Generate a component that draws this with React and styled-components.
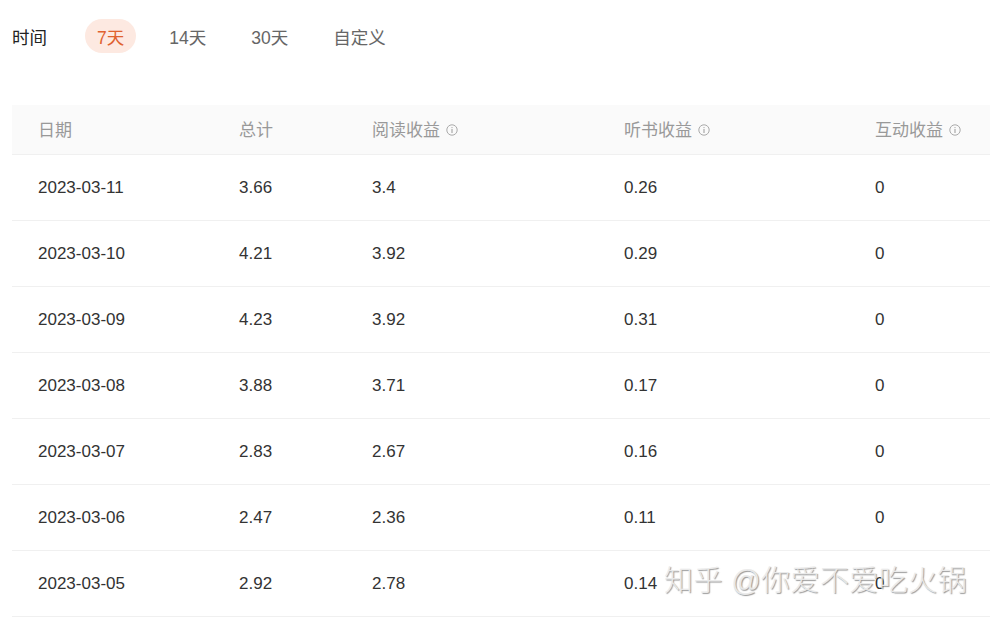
import React from 'react';
import styled, { createGlobalStyle } from 'styled-components';

const GlobalStyle = createGlobalStyle`
  body {
    margin: 0;
    background: #fff;
    font-family: 'Liberation Sans', 'Noto Sans CJK SC', sans-serif;
  }
`;

const Root = styled.div`
  position: relative;
  width: 990px;
  height: 617px;
  overflow: hidden;
`;

const FilterBar = styled.div`
  display: flex;
  align-items: center;
  height: 34px;
  padding: 19px 0 0 12px;
`;

const FilterLabel = styled.span`
  font-size: 17.5px;
  color: #222;
  margin-right: 38px;
`;

const FilterItem = styled.span`
  display: inline-flex;
  align-items: center;
  height: 34px;
  padding: 0 12px;
  margin-right: 21px;
  border-radius: 17px;
  font-size: 17.5px;
  color: ${(props) => (props.$active ? '#e0622f' : '#666')};
  background-color: ${(props) => (props.$active ? '#fde9e1' : 'transparent')};
`;

const Table = styled.div`
  margin: 52px 0 0 12px;
`;

const Row = styled.div`
  display: grid;
  grid-template-columns: 201px 133px 252px 251px 1fr;
  align-items: center;
  height: ${(props) => (props.$head ? '50px' : '66px')};
  padding-bottom: ${(props) => (props.$head ? '2px' : '0')};
  background-color: ${(props) => (props.$head ? '#fafafa' : '#fff')};
  border-bottom: 1px solid #f0f0f0;
  box-sizing: border-box;
`;

const Cell = styled.div`
  padding-left: 26px;
  font-size: 17px;
  color: ${(props) => (props.$head ? '#999' : '#333')};
  display: flex;
  align-items: center;
`;

const InfoIcon = styled.svg`
  width: 12px;
  height: 12px;
  margin-left: 6px;
  margin-top: 2px;
`;

const Watermark = styled.div`
  position: absolute;
  left: 664px;
  top: 557px;
  font-size: 29px;
  font-weight: 300;
  color: rgba(235, 235, 235, 0.95);
  text-shadow: 1px 1px 1px rgba(110, 110, 110, 0.7);
  white-space: nowrap;
  letter-spacing: 0.4px;
`;

const Info = () => (
  <InfoIcon viewBox="0 0 12 12">
    <circle cx="6" cy="6" r="5.2" fill="none" stroke="#aaa" strokeWidth="1" />
    <circle cx="6" cy="3.6" r="0.7" fill="#aaa" />
    <rect x="5.4" y="5" width="1.2" height="4" fill="#aaa" />
  </InfoIcon>
);

const ranges = ['7天', '14天', '30天', '自定义'];

const rows = [
  ['2023-03-11', '3.66', '3.4', '0.26', '0'],
  ['2023-03-10', '4.21', '3.92', '0.29', '0'],
  ['2023-03-09', '4.23', '3.92', '0.31', '0'],
  ['2023-03-08', '3.88', '3.71', '0.17', '0'],
  ['2023-03-07', '2.83', '2.67', '0.16', '0'],
  ['2023-03-06', '2.47', '2.36', '0.11', '0'],
  ['2023-03-05', '2.92', '2.78', '0.14', '0'],
];

const App = () => {
  return (
    <Root>
      <GlobalStyle />
      <FilterBar>
        <FilterLabel>时间</FilterLabel>
        {ranges.map((range, index) => (
          <FilterItem key={range} $active={index === 0}>
            {range}
          </FilterItem>
        ))}
      </FilterBar>
      <Table>
        <Row $head>
          <Cell $head>日期</Cell>
          <Cell $head>总计</Cell>
          <Cell $head>
            阅读收益
            <Info />
          </Cell>
          <Cell $head>
            听书收益
            <Info />
          </Cell>
          <Cell $head>
            互动收益
            <Info />
          </Cell>
        </Row>
        {rows.map((row) => (
          <Row key={row[0]}>
            {row.map((value, i) => (
              <Cell key={i}>{value}</Cell>
            ))}
          </Row>
        ))}
      </Table>
      <Watermark>知乎 @你爱不爱吃火锅</Watermark>
    </Root>
  );
};

export default App;
